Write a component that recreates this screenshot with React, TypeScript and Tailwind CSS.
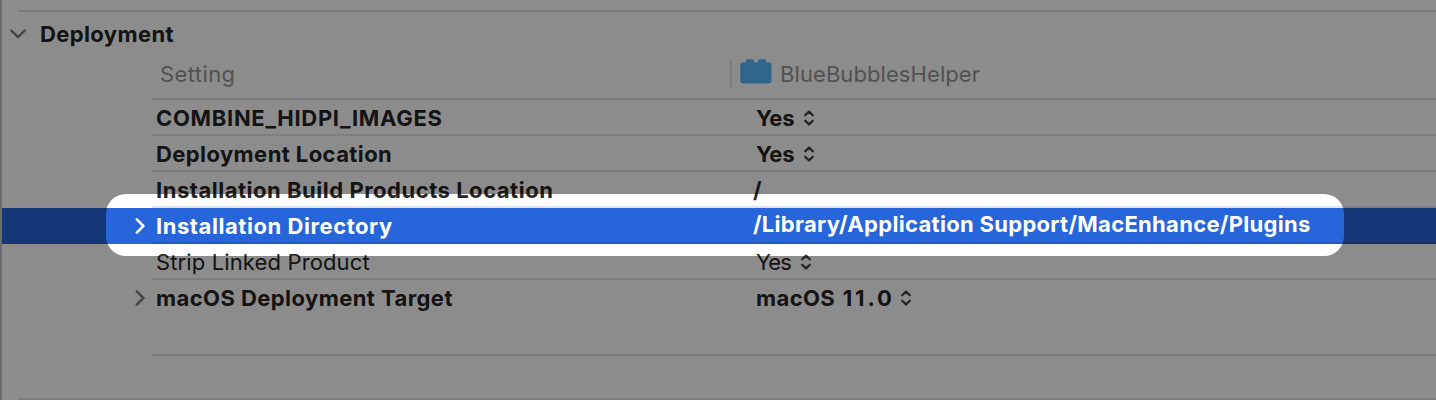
import type { ReactNode } from "react";

function Stepper({ className = "" }: { className?: string }) {
  return (
    <svg width="10" height="16" viewBox="0 0 10 16" fill="none" stroke="#404040" strokeWidth="2.2" strokeLinecap="round" strokeLinejoin="round" className={`shrink-0 ${className}`}>
      <path d="M1.2 5.3 5 1.6l3.8 3.7M1.2 10.7 5 14.4l3.8-3.7" />
    </svg>
  );
}

function ChevronRight({ className = "" }: { className?: string }) {
  return (
    <svg width="10" height="16" viewBox="0 0 10 16" fill="none" stroke="currentColor" strokeWidth="2.5" strokeLinecap="round" strokeLinejoin="round" className={className}>
      <path d="M1.8 1.4 8.4 8l-6.6 6.6" />
    </svg>
  );
}

function BrickIcon() {
  return (
    <svg width="32" height="25" viewBox="0 0 32 25" fill="#59b9fa" className="mb-[5px] shrink-0">
      <rect x="0.3" y="3.2" width="31.2" height="21.2" rx="3.2" />
      <rect x="6" y="0.2" width="8" height="6" rx="1.6" />
      <rect x="18" y="0.2" width="8" height="6" rx="1.6" />
    </svg>
  );
}

type RowProps = {
  name: string;
  nameClass: string;
  children: ReactNode;
  chevron?: boolean;
  selected?: boolean;
  last?: boolean;
};

function Row({ name, nameClass, children, chevron, selected, last }: RowProps) {
  return (
    <div className={`flex h-9 ${selected ? "bg-[#2765db] text-white" : "text-[#262626]"}`}>
      <div className="flex w-[150px] shrink-0 items-center justify-end pr-[7px]">
        {chevron && <ChevronRight className={selected ? "text-white" : "text-[#808080]"} />}
      </div>
      <div className={`flex flex-1 border-black/10 pl-1 leading-9 ${last ? "" : "border-b-2"}`}>
        <span className={`w-[600px] shrink-0 ${nameClass}`}>{name}</span>
        <div className="flex h-9 items-center">{children}</div>
      </div>
    </div>
  );
}

export default function App() {
  return (
    <div className="relative h-[400px] w-full overflow-hidden border-l-2 border-[#6a6a6a] bg-white font-['Inter',sans-serif] text-[22px] whitespace-nowrap">
      <div className="pt-2.5">
        <div className="ml-4 h-0.5 bg-black/10" />
        <div className="flex h-11 items-center pl-2">
          <svg width="16" height="10" viewBox="0 0 16 10" fill="none" stroke="#808080" strokeWidth="2.6" strokeLinecap="round" strokeLinejoin="round">
            <path d="M1.4 1.6 8 8.2l6.6-6.6" />
          </svg>
          <h2 className="pl-3.5 font-bold tracking-[0.38px] text-[#262626]">Deployment</h2>
        </div>
        <div className="ml-[150px] flex h-11 border-b-2 border-black/10 text-[#969696]">
          <span className="w-[578px] shrink-0 pl-[8px] leading-9 tracking-[0.4px]">Setting</span>
          <div className="mt-1 h-7 w-0.5 shrink-0 bg-black/10" />
          <div className="flex h-9 items-center pl-2">
            <BrickIcon />
            <span className="pl-[8px] tracking-[0.08px]">BlueBubblesHelper</span>
          </div>
        </div>
      </div>

      <Row name="COMBINE_HIDPI_IMAGES" nameClass="font-bold tracking-[0.69px]">
        <span className="font-bold tracking-[-0.3px]">Yes</span>
        <Stepper className="ml-[9.5px]" />
      </Row>
      <Row name="Deployment Location" nameClass="font-bold tracking-[0.41px]">
        <span className="font-bold tracking-[-0.3px]">Yes</span>
        <Stepper className="ml-[9.5px]" />
      </Row>
      <Row name="Installation Build Products Location" nameClass="font-bold tracking-[0.52px]">
        <span className="-ml-[3px] font-bold">/</span>
      </Row>
      <Row name="Installation Directory" nameClass="font-bold tracking-[0.56px]" chevron selected>
        <span className="-ml-[3px] pb-1 font-bold tracking-[0.31px]">/Library/Application Support/MacEnhance/Plugins</span>
      </Row>
      <Row name="Strip Linked Product" nameClass="tracking-[0.13px]">
        <span className="tracking-[-0.9px]">Yes</span>
        <Stepper className="ml-[10px]" />
      </Row>
      <Row name="macOS Deployment Target" nameClass="font-bold tracking-[0.43px]" chevron last>
        <span className="font-bold tracking-[0.4px]">macOS</span>
        <span className="pl-[7.5px] font-bold tracking-[2.9px]">11.0</span>
        <Stepper className="ml-[6px]" />
      </Row>

      <div className="mt-[38px] ml-[150px] h-0.5 bg-black/10" />
      <div className="mt-[42px] ml-4 h-0.5 bg-black/10" />

      <div className="pointer-events-none absolute top-[193.5px] left-[104px] h-[62.5px] w-[1238px] rounded-[20px] shadow-[0_0_0_1500px_rgba(0,0,0,0.45)]" />
    </div>
  );
}
